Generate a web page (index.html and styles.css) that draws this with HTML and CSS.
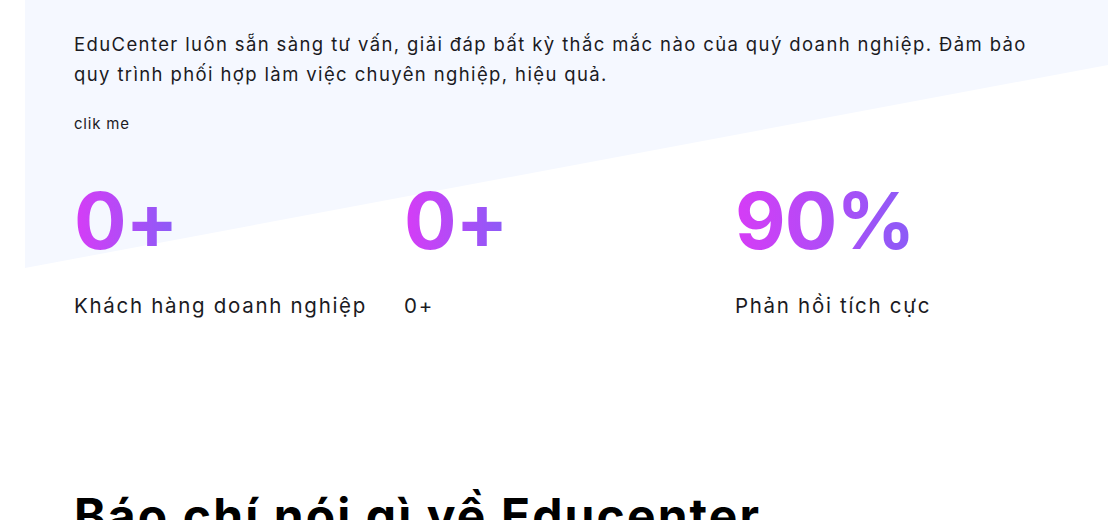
FILE: index.html
```html
<!DOCTYPE html>
<html lang="vi">
<head>
<meta charset="utf-8">
<title>EduCenter</title>
<link rel="stylesheet" href="styles.css">
</head>
<body>
<section class="intro">
  <div class="container">
    <p class="lead">EduCenter luôn sẵn sàng tư vấn, giải đáp bất kỳ thắc mắc nào của quý doanh nghiệp. Đảm bảo quy trình phối hợp làm việc chuyên nghiệp, hiệu quả.</p>
    <a class="clik" href="#">clik me</a>
    <div class="stats">
      <div class="stat">
        <div class="num"><span class="grad">0+</span></div>
        <div class="label">Khách hàng doanh nghiệp</div>
      </div>
      <div class="stat">
        <div class="num"><span class="grad">0+</span></div>
        <div class="label">0+</div>
      </div>
      <div class="stat">
        <div class="num"><span class="grad">90%</span></div>
        <div class="label">Phản hồi tích cực</div>
      </div>
    </div>
  </div>
</section>
<section class="press">
  <div class="container">
    <h2 class="press-title">Báo chí nói gì về Educenter</h2>
  </div>
</section>
</body>
</html>
```
FILE: styles.css
```css
* { box-sizing: border-box; }
html, body { margin: 0; padding: 0; background: #fff; }
body { font-family: Inter, "Noto Sans", sans-serif; color: #1b1b1f; }

.intro { position: relative; z-index: 0; padding-top: 29px; }
.intro::before {
  content: "";
  position: absolute;
  left: 25px; right: 0; top: 0;
  height: 268px;
  background: #f5f8ff;
  clip-path: polygon(0 0, 100% 0, 100% 65px, 0 100%);
  z-index: -1;
}
.container { padding-left: 74px; padding-right: 42px; }

.lead { margin: 0; font-size: 18.5px; line-height: 30px; letter-spacing: 1.38px; max-width: 975px; }
.clik { display: inline-block; margin-top: 26px; font-size: 15px; line-height: 18px; letter-spacing: 0.8px; color: #1b1b1f; text-decoration: none; }

.stats { display: grid; grid-template-columns: 330px 331px 331px; margin-top: 40px; }
.num { font-size: 78px; font-weight: 700; line-height: 96px; letter-spacing: -1px; }
.grad {
  background: linear-gradient(90deg, #d63cf6, #8a5cf7);
  -webkit-background-clip: text; background-clip: text;
  color: transparent;
}
.label { margin-top: 25px; font-size: 20.5px; line-height: 24px; letter-spacing: 1.7px; }

.press { padding-top: 170px; }
.press-title { margin: 0; font-size: 48px; font-weight: 700; line-height: 56px; letter-spacing: 2.1px; color: #000; }
```
